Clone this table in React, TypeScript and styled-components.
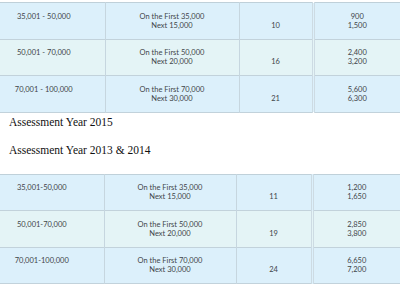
import * as React from 'react'
import styled, { createGlobalStyle } from 'styled-components'

interface Row {
	range: string
	first: string
	next: string
	tax: string
	amounts: [string, string]
	tone: 'blue' | 'green'
}

const topRows: Row[] = [
	{ range: '35,001 - 50,000', first: '35,000', next: '15,000', tax: '10', amounts: ['900', '1,500'], tone: 'blue' },
	{ range: '50,001 - 70,000', first: '50,000', next: '20,000', tax: '16', amounts: ['2,400', '3,200'], tone: 'green' },
	{ range: '70,001 - 100,000', first: '70,000', next: '30,000', tax: '21', amounts: ['5,600', '6,300'], tone: 'blue' }
]

const bottomRows: Row[] = [
	{ range: '35,001-50,000', first: '35,000', next: '15,000', tax: '11', amounts: ['1,200', '1,650'], tone: 'blue' },
	{ range: '50,001-70,000', first: '50,000', next: '20,000', tax: '19', amounts: ['2,850', '3,800'], tone: 'green' },
	{ range: '70,001-100,000', first: '70,000', next: '30,000', tax: '24', amounts: ['6,650', '7,200'], tone: 'blue' }
]

interface TableProps {
	rows: Row[]
	widths: number[]
	rangeShift: number
}

const RateTable = ({ rows, widths, rangeShift }: TableProps) => (
	<Table>
		<colgroup>
			{widths.map((w, i) => <col key={i} style={{ width: w }} />)}
		</colgroup>
		<tbody>
			{rows.map(r => (
				<BodyRow key={r.range} tone={r.tone}>
					<RangeCell shift={rangeShift}>
						<Line>{r.range}</Line>
						<Line>&nbsp;</Line>
					</RangeCell>
					<Cell>
						<Line>On the First {r.first}</Line>
						<Line>Next {r.next}</Line>
					</Cell>
					<Cell>
						<Line>&nbsp;</Line>
						<Line>{r.tax}</Line>
					</Cell>
					<AmountCell>
						<Line>{r.amounts[0]}</Line>
						<Line>{r.amounts[1]}</Line>
					</AmountCell>
				</BodyRow>
			))}
		</tbody>
	</Table>
)

export default function App() {
	return (
		<Page>
			<GlobalStyle />
			<RateTable rows={topRows} widths={[105, 134, 74, 87]} rangeShift={17} />
			<Headings>
				<Heading>Assessment Year 2015</Heading>
				<Heading>Assessment Year 2013 &amp; 2014</Heading>
			</Headings>
			<RateTable rows={bottomRows} widths={[104, 132, 76, 88]} rangeShift={20} />
		</Page>
	)
}

const GlobalStyle = createGlobalStyle`
	html, body {
		margin: 0;
		padding: 0;
		background: #ffffff;
	}
`

const Page = styled.div`
	width: 400px;
	height: 284px;
	overflow: hidden;
	padding-top: 2px;
	box-sizing: border-box;
	font-family: Lato, "Open Sans", sans-serif;
`

const Table = styled.table`
	width: 400px;
	table-layout: fixed;
	border-collapse: collapse;
	border-top: 1px solid #bfd0d9;
	border-bottom: 1px solid #bfd0d9;
`

const BodyRow = styled.tr<{ tone: 'blue' | 'green' }>`
	height: 36.5px;
	background: ${p => (p.tone === 'blue' ? '#dcf0fb' : '#e4f4f6')};
	border-bottom: 1px solid #c2d2db;
`

const Cell = styled.td`
	padding: 0;
	text-align: center;
	vertical-align: middle;
	border-left: 1px solid #c6d6df;
	color: #3f4549;
	font-size: 7.5px;
	line-height: 9px;
`

const RangeCell = styled(Cell)<{ shift: number }>`
	border-left: none;
	padding-right: ${p => p.shift}px;
`

const AmountCell = styled(Cell)`
	border-left: 3px double #cddbe3;
`

const Line = styled.div`
	white-space: nowrap;
`

const Headings = styled.div`
	height: 61px;
	padding: 2px 0 0 9px;
	box-sizing: border-box;
	display: flex;
	flex-direction: column;
	gap: 14px;
`

const Heading = styled.div`
	font-family: "Liberation Serif", "Times New Roman", serif;
	font-size: 11.5px;
	line-height: 14px;
	color: #111111;
`
